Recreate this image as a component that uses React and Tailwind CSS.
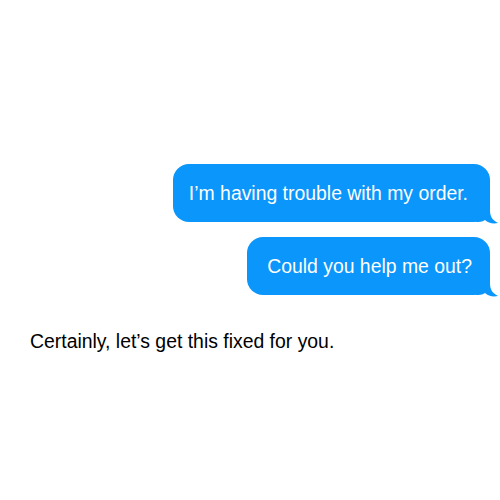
const Bubble = ({ children, pad = 'pl-[16px] pr-[22px]' }) => (
  <div className="relative self-end">
    <div className={`rounded-[16px] bg-[#0a96fa] py-[18px] text-[19.4px] leading-[22px] text-white ${pad}`}>
      {children}
    </div>
    <svg
      className="absolute bottom-[-2px] right-[-8px]"
      width="22"
      height="22"
      viewBox="0 0 22 22"
      fill="#0a96fa"
    >
      <path d="M0 0 H14 V8 C14 14 16 18 22 21 C17 22 12 21 9 18 C6 20 3 20 0 20 Z" />
    </svg>
  </div>
);

const App = () => {
  return (
    <div
      className="flex h-[500px] w-[500px] flex-col bg-white pr-[10px] pt-[164px]"
      style={{ fontFamily: '"Liberation Sans", Arial, sans-serif' }}
    >
      <Bubble>I’m having trouble with my order.</Bubble>
      <div className="h-[15px]" />
      <Bubble pad="pl-[20px] pr-[18px]">Could you help me out?</Bubble>
      <p className="mt-[35px] pl-[30px] text-[19.4px] leading-[22px] text-black">
        Certainly, let’s get this fixed for you.
      </p>
    </div>
  );
};

export default App;
